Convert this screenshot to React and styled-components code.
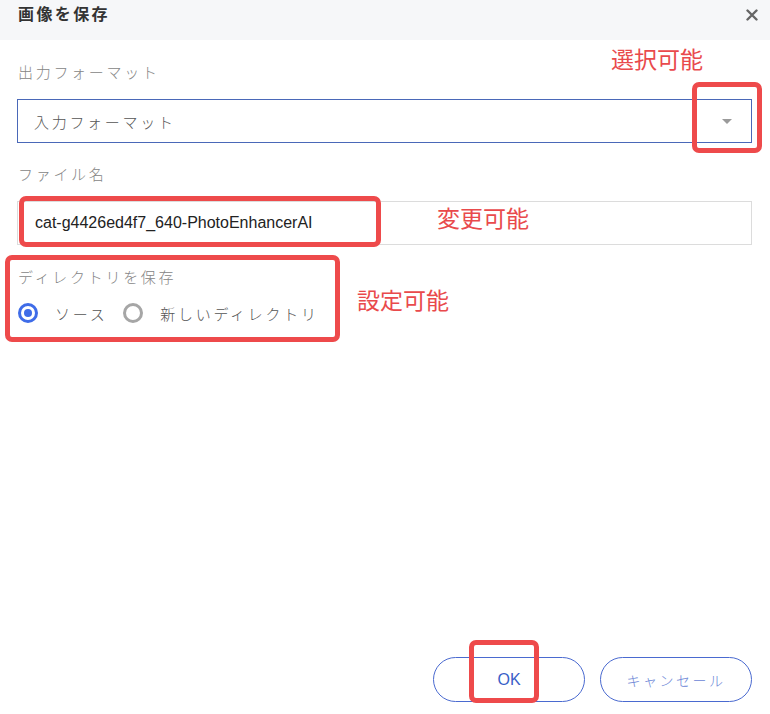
import React, { useState } from "react";
import styled, { createGlobalStyle } from "styled-components";

const GlobalStyle = createGlobalStyle`
  html, body {
    margin: 0;
    padding: 0;
    background: #ffffff;
  }
  * {
    box-sizing: border-box;
  }
`;

const JP = `"Liberation Serif", "Noto Sans CJK JP", serif`;
const JP_SANS = `"Noto Sans CJK JP", sans-serif`;

// dialog shell
const Dialog = styled.div`
  position: relative;
  width: 770px;
  height: 714px;
  display: flex;
  flex-direction: column;
  background: #fff;
  overflow: hidden;
`;

const Header = styled.div`
  height: 40px;
  flex: none;
  display: flex;
  align-items: center;
  justify-content: space-between;
  padding: 0 8px 10px 18px;
  background: #f6f7f9;
`;

const Title = styled.h1`
  margin: 0;
  font-family: ${JP};
  font-size: 16px;
  font-weight: 700;
  letter-spacing: 2.4px;
  color: #333;
  line-height: 20px;
`;

const CloseButton = styled.button`
  border: none;
  background: none;
  padding: 0;
  width: 20px;
  height: 20px;
  display: flex;
  align-items: center;
  justify-content: center;
  cursor: pointer;
`;

const Body = styled.div`
  flex: 1;
  display: flex;
  flex-direction: column;
  padding: 0 18px 0 17px;
`;

const Label = styled.div`
  margin-top: ${(p) => p.$top}px;
  padding-left: 1px;
  font-family: ${JP};
  font-size: 15px;
  font-weight: 300;
  letter-spacing: 2.7px;
  line-height: 22px;
  color: #858585;
`;

const Select = styled.div`
  margin-top: 15px;
  height: 44px;
  display: flex;
  align-items: center;
  justify-content: space-between;
  padding: 0 19px 0 16px;
  border: 1px solid #4a68b8;
  font-family: ${JP};
  font-size: 15px;
  font-weight: 300;
  letter-spacing: 2.7px;
  color: #555;
  cursor: pointer;
`;

const Caret = styled.span`
  width: 0;
  height: 0;
  border-left: 5px solid transparent;
  border-right: 5px solid transparent;
  border-top: 5px solid #9a9a9a;
`;

const TextInput = styled.input`
  margin-top: 15px;
  height: 44px;
  width: 100%;
  padding: 0 17px;
  border: 1px solid #dcdcdc;
  outline: none;
  font-family: "Liberation Sans", Arial, sans-serif;
  font-size: 16px;
  color: #222;
`;

const RadioRow = styled.div`
  margin-top: 13px;
  height: 22px;
  display: flex;
  align-items: center;
  padding-left: 1px;
`;

const RadioOption = styled.label`
  display: flex;
  align-items: center;
  gap: 17px;
  margin-right: ${(p) => p.$gap || 0}px;
  font-family: ${JP};
  font-size: 15px;
  font-weight: 300;
  letter-spacing: 2.7px;
  color: #555;
  cursor: pointer;
`;

const RadioDot = styled.span`
  width: 20px;
  height: 20px;
  border-radius: 50%;
  border: 3px solid ${(p) => (p.$checked ? "#3f6ce8" : "#a6a6a6")};
  display: flex;
  align-items: center;
  justify-content: center;

  &::after {
    content: "";
    width: 8px;
    height: 8px;
    border-radius: 50%;
    background: ${(p) => (p.$checked ? "#3f6ce8" : "transparent")};
  }
`;

const Footer = styled.div`
  margin-top: auto;
  display: flex;
  justify-content: flex-end;
  gap: 15px;
  padding: 0 18px 12px 0;
`;

const PillButton = styled.button`
  width: 152px;
  height: 45px;
  border-radius: 23px;
  border: 1px solid #4a6ad0;
  background: #fff;
  color: ${(p) => (p.$primary ? "#3a5fc8" : "#6b86d6")};
  font-family: ${(p) => (p.$primary ? `"Liberation Sans", Arial, sans-serif` : JP)};
  font-size: ${(p) => (p.$primary ? 16 : 14)}px;
  font-weight: 300;
  letter-spacing: ${(p) => (p.$primary ? 0 : 2.5)}px;
  cursor: pointer;
`;

// annotation overlay (red marks drawn over the dialog)
const Mark = styled.div`
  position: absolute;
  border: 5px solid #ee4a4b;
  border-radius: 7px;
  pointer-events: none;
`;

const Note = styled.div`
  position: absolute;
  font-family: ${JP_SANS};
  font-size: 23px;
  line-height: 26px;
  color: #e94a4c;
  pointer-events: none;
`;

const marks = [
  { left: 692, top: 82, width: 70, height: 71 },
  { left: 19, top: 196, width: 362, height: 51 },
  { left: 5, top: 255, width: 335, height: 87 },
  { left: 469, top: 640, width: 70, height: 63 },
];

const notes = [
  { text: "選択可能", left: 611, top: 45 },
  { text: "変更可能", left: 437, top: 204 },
  { text: "設定可能", left: 357, top: 286 },
];

export default function App() {
  const [dir, setDir] = useState("source");
  const [name, setName] = useState("cat-g4426ed4f7_640-PhotoEnhancerAI");

  return (
    <>
      <GlobalStyle />
      <Dialog>
        <Header>
          <Title>画像を保存</Title>
          <CloseButton aria-label="close">
            <svg width="12" height="12" viewBox="0 0 12 12">
              <path d="M1.5 1.5 L10.5 10.5 M10.5 1.5 L1.5 10.5" stroke="#666" strokeWidth="2.4" strokeLinecap="round" />
            </svg>
          </CloseButton>
        </Header>
        <Body>
          <Label $top={22}>出力フォーマット</Label>
          <Select>
            <span>入力フォーマット</span>
            <Caret />
          </Select>
          <Label $top={21}>ファイル名</Label>
          <TextInput value={name} onChange={(e) => setName(e.target.value)} />
          <Label $top={22}>ディレクトリを保存</Label>
          <RadioRow>
            <RadioOption $gap={16} onClick={() => setDir("source")}>
              <RadioDot $checked={dir === "source"} />
              ソース
            </RadioOption>
            <RadioOption onClick={() => setDir("new")}>
              <RadioDot $checked={dir === "new"} />
              新しいディレクトリ
            </RadioOption>
          </RadioRow>
        </Body>
        <Footer>
          <PillButton $primary>OK</PillButton>
          <PillButton>キャンセール</PillButton>
        </Footer>

        {marks.map((m, i) => (
          <Mark key={i} style={{ left: m.left, top: m.top, width: m.width, height: m.height }} />
        ))}
        {notes.map((n) => (
          <Note key={n.text} style={{ left: n.left, top: n.top }}>
            {n.text}
          </Note>
        ))}
      </Dialog>
    </>
  );
}
